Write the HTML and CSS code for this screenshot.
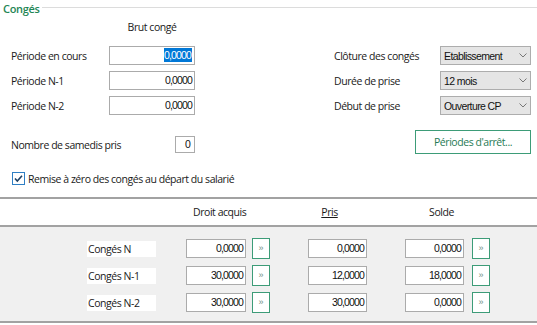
FILE: index.html
```html
<!DOCTYPE html>
<html lang="fr">
<head>
<meta charset="utf-8">
<link rel="stylesheet" href="styles.css">
</head>
<body>
<div class="panel">
  <div class="legend"><span class="legend-title">Congés</span><span class="legend-line"></span></div>
  <div class="top">
    <div class="left">
      <div class="col-head">Brut congé</div>
      <div class="rows">
        <div class="row"><span class="lbl">Période en cours</span><div class="num"><span class="sel">0,0000</span></div></div>
        <div class="row"><span class="lbl">Période N-1</span><div class="num">0,0000</div></div>
        <div class="row"><span class="lbl">Période N-2</span><div class="num">0,0000</div></div>
      </div>
    </div>
    <div class="right">
      <div class="rows">
        <div class="row"><span class="lbl-r">Clôture des congés</span><div class="select"><span>Etablissement</span><svg width="8" height="5" viewBox="0 0 8 5"><polyline points="0.5,0.5 4,4 7.5,0.5" fill="none" stroke="#777" stroke-width="1"/></svg></div></div>
        <div class="row"><span class="lbl-r">Durée de prise</span><div class="select"><span>12 mois</span><svg width="8" height="5" viewBox="0 0 8 5"><polyline points="0.5,0.5 4,4 7.5,0.5" fill="none" stroke="#777" stroke-width="1"/></svg></div></div>
        <div class="row"><span class="lbl-r">Début de prise</span><div class="select"><span>Ouverture CP</span><svg width="8" height="5" viewBox="0 0 8 5"><polyline points="0.5,0.5 4,4 7.5,0.5" fill="none" stroke="#777" stroke-width="1"/></svg></div></div>
      </div>
    </div>
  </div>
  <div class="samedi-row">
    <div class="samedi">
      <span class="lbl-s">Nombre de samedis pris</span>
      <div class="num small">0</div>
    </div>
    <div class="btn-arret">Périodes d'arrêt...</div>
  </div>
  <div class="check-row">
    <svg class="cb" width="13" height="13" viewBox="0 0 13 13"><rect x="0.5" y="0.5" width="12" height="12" fill="#fff" stroke="#2f7fc4"/><polyline points="3,6.5 5.3,9 10,3.8" fill="none" stroke="#1d3f63" stroke-width="1.6"/></svg>
    <span>Remise à zéro des congés au départ du salarié</span>
  </div>
</div>
<div class="table">
  <div class="thead">
    <span class="h h-droit">Droit acquis</span>
    <span class="h h-pris">Pris</span>
    <span class="h h-solde">Solde</span>
  </div>
  <div class="tbody">
    <div class="trow">
      <span class="tlbl">Congés N</span>
      <div class="num c-droit">0,0000</div><div class="go">»</div>
      <div class="num c-pris">0,0000</div>
      <div class="num c-solde">0,0000</div><div class="go go2">»</div>
    </div>
    <div class="trow">
      <span class="tlbl">Congés N-1</span>
      <div class="num c-droit">30,0000</div><div class="go">»</div>
      <div class="num c-pris">12,0000</div>
      <div class="num c-solde">18,0000</div><div class="go go2">»</div>
    </div>
    <div class="trow">
      <span class="tlbl">Congés N-2</span>
      <div class="num c-droit">30,0000</div><div class="go">»</div>
      <div class="num c-pris">30,0000</div>
      <div class="num c-solde">0,0000</div><div class="go go2">»</div>
    </div>
  </div>
</div>
</body>
</html>
```
FILE: styles.css
```css
html, body {
  margin: 0;
  padding: 0;
  background: #fff;
}
body {
  width: 537px;
  height: 325px;
  overflow: hidden;
  font-family: "Open Sans", "Noto Sans", sans-serif;
  font-size: 10.5px;
  letter-spacing: -0.45px;
  color: #1a1a1a;
  white-space: nowrap;
}
.panel {
  padding-top: 2px;
}
.legend {
  display: flex;
  align-items: center;
  height: 14px;
  padding-left: 3px;
}
.legend-title {
  color: #1f8655;
  font-weight: 600;
  font-size: 11px;
  letter-spacing: -0.3px;
  line-height: 14px;
}
.legend-line {
  flex: 1;
  height: 1px;
  background: #dcdcdc;
  margin-left: 2px;
  margin-top: -3px;
}
.top {
  display: grid;
  grid-template-columns: 334px 1fr;
}
.left {
  padding-left: 11px;
}
.col-head {
  margin-top: 4px;
  margin-left: 98px;
  width: 86px;
  text-align: center;
  line-height: 14px;
  height: 14px;
}
.rows {
  margin-top: 12px;
  display: flex;
  flex-direction: column;
  gap: 6px;
}
.right .rows {
  margin-top: 30px;
}
.row {
  display: flex;
  align-items: center;
  height: 19px;
}
.lbl {
  width: 98px;
}
.lbl-r {
  width: 106px;
}
.num {
  box-sizing: border-box;
  height: 19px;
  border: 1px solid #ababab;
  background: #fff;
  text-align: right;
  padding-right: 2px;
  font-family: "Liberation Sans", Arial, sans-serif;
  font-size: 10.5px;
  letter-spacing: -0.85px;
  line-height: 17px;
  color: #111;
}
.left .num {
  width: 86px;
}
.sel {
  background: #0078d7;
  color: #fff;
  padding: 1px 1px 1px 0;
}
.select {
  box-sizing: border-box;
  width: 91px;
  height: 19px;
  border: 1px solid #adadad;
  background: #e5e5e5;
  display: flex;
  align-items: center;
  justify-content: space-between;
  padding: 0 3px 0 3px;
  font-family: "Liberation Sans", Arial, sans-serif;
  font-size: 10.5px;
  letter-spacing: -0.6px;
  color: #111;
}
.samedi-row {
  display: flex;
  align-items: flex-start;
  margin-top: 15px;
  padding-left: 11px;
  padding-right: 6px;
}
.samedi {
  display: flex;
  align-items: center;
  margin-top: 6px;
}
.lbl-s {
  width: 164px;
}
.num.small {
  width: 20px;
  height: 17px;
  line-height: 15px;
  padding-right: 4px;
}
.btn-arret {
  margin-left: auto;
  box-sizing: border-box;
  width: 116px;
  height: 24px;
  border: 1px solid #3d9c78;
  color: #1f7a55;
  text-align: center;
  line-height: 22px;
  background: #fff;
}
.check-row {
  display: flex;
  align-items: center;
  margin-top: 18px;
  padding-left: 12px;
  height: 13px;
}
.cb {
  display: block;
  margin-right: 3px;
}
.table {
  margin-top: 12px;
  border-top: 2px solid #a2a2a2;
  border-bottom: 2px solid #a2a2a2;
}
.thead {
  display: flex;
  align-items: center;
  height: 26px;
  background: #fff;
  border-bottom: 2px solid #a2a2a2;
  padding-left: 186px;
}
.h {
  text-align: center;
  line-height: 14px;
  box-sizing: border-box;
}
.h-droit {
  width: 60px;
  padding-left: 7px;
}
.h-pris {
  margin-left: 62px;
  width: 59px;
  padding-right: 16px;
  text-decoration: underline;
}
.h-solde {
  margin-left: 38px;
  width: 59px;
  padding-left: 14px;
}
.tbody {
  background: #f0f0f0;
  padding: 11px 0 8px 87px;
  display: flex;
  flex-direction: column;
  gap: 6px;
}
.trow {
  display: flex;
  align-items: center;
  height: 21px;
}
.tlbl {
  box-sizing: border-box;
  width: 69px;
  height: 16px;
  line-height: 16px;
  background: #fff;
  padding-left: 1px;
}
.c-droit {
  margin-left: 30px;
  width: 60px;
}
.go {
  box-sizing: border-box;
  width: 18px;
  height: 21px;
  border: 1px solid #3d9c78;
  background: #fff;
  margin-left: 6px;
  color: #6f8f85;
  font-family: "Liberation Sans", Arial, sans-serif;
  font-size: 9px;
  letter-spacing: 0;
  line-height: 19px;
  text-align: center;
}
.go2 {
  margin-left: 8px;
}
.c-pris {
  margin-left: 38px;
  width: 59px;
}
.c-solde {
  margin-left: 38px;
  width: 59px;
}
```
